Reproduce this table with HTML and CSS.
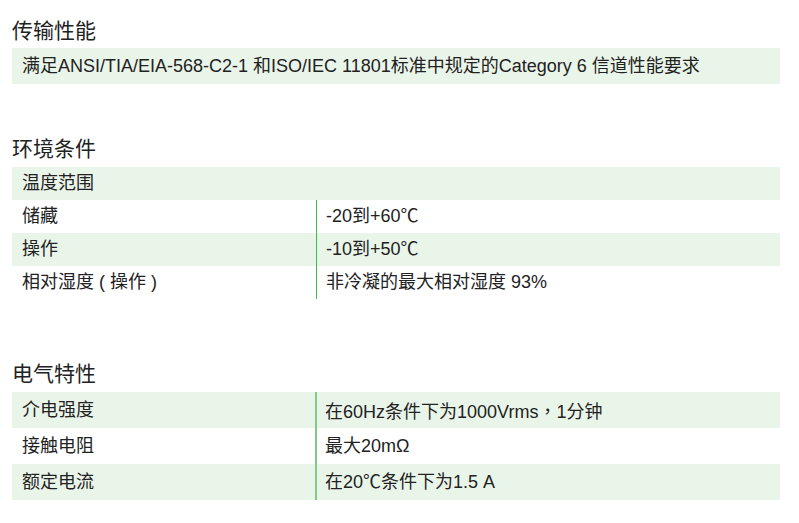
FILE: index.html
```html
<!DOCTYPE html>
<html lang="zh-CN">
<head>
<meta charset="utf-8">
<link rel="stylesheet" href="styles.css">
</head>
<body>
<div class="page">
  <section class="sec sec1">
    <h2 class="title">传输性能</h2>
    <div class="box">满足ANSI/TIA/EIA-568-C2-1 和ISO/IEC 11801标准中规定的Category 6 信道性能要求</div>
  </section>

  <section class="sec sec2">
    <h2 class="title">环境条件</h2>
    <div class="tbl env">
      <div class="row full alt"><div class="k">温度范围</div></div>
      <div class="row"><div class="k">储藏</div><div class="v">-20到+60℃</div></div>
      <div class="row alt"><div class="k">操作</div><div class="v">-10到+50℃</div></div>
      <div class="row"><div class="k">相对湿度 ( 操作 )</div><div class="v">非冷凝的最大相对湿度 93%</div></div>
    </div>
  </section>

  <section class="sec sec3">
    <h2 class="title">电气特性</h2>
    <div class="tbl elec">
      <div class="row alt"><div class="k">介电强度</div><div class="v">在60Hz条件下为1000Vrms<span class="p" lang="zh-TW">，</span>1分钟</div></div>
      <div class="row"><div class="k">接触电阻</div><div class="v">最大20mΩ</div></div>
      <div class="row alt"><div class="k">额定电流</div><div class="v">在20℃条件下为1.5 A</div></div>
    </div>
  </section>
</div>
</body>
</html>
```
FILE: styles.css
```css
html, body {
  margin: 0;
  padding: 0;
  background: #ffffff;
}
body {
  font-family: "Liberation Sans", "Noto Sans CJK SC", sans-serif;
  color: #222222;
}
.page {
  width: 768px;
  padding-left: 12px;
}
.title {
  margin: 0;
  font-size: 21px;
  font-weight: normal;
  line-height: 26px;
  color: #222222;
}
.sec1 { padding-top: 18px; }
.sec1 .title { margin-bottom: 4px; }
.sec2 { margin-top: 52px; }
.sec2 .title { margin-bottom: 5px; }
.sec3 { margin-top: 62px; }
.sec3 .title { margin-bottom: 5px; }

.p {
  font-family: "Noto Sans CJK TC", sans-serif;
}
.box {
  background: #eaf5ea;
  height: 36px;
  line-height: 36px;
  font-size: 18px;
  padding-left: 10px;
  white-space: nowrap;
}
.tbl .row {
  display: flex;
  font-size: 18px;
}
.tbl .row.alt { background: #eaf5ea; }
.env .row { height: 33px; line-height: 33px; }
.elec .row { height: 36px; line-height: 36px; }
.tbl .k {
  width: 294px;
  padding-left: 10px;
  flex: none;
}
.tbl .v {
  flex: 1;
  padding-left: 9px;
}
.env .v { border-left: 1px solid #3dbb4d; }
.elec .k { width: 293px; }
.elec .v { border-left: 2px solid #7fcc82; padding-left: 8px; }
```
